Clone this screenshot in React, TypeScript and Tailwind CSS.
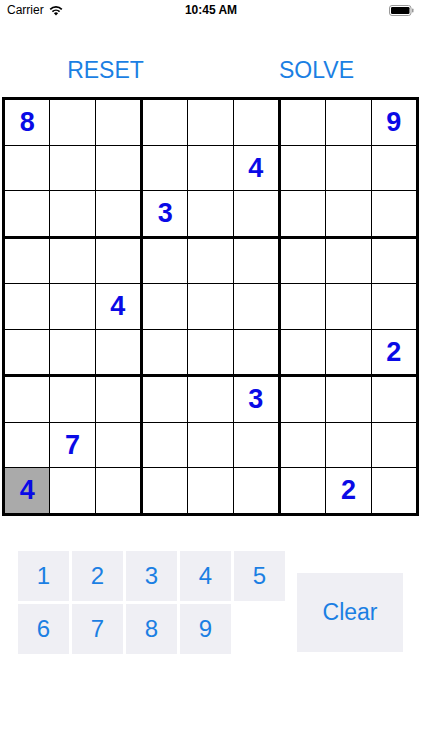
import React, { useState } from 'react';

// puzzle givens, row by row (0 = empty)
const GIVENS: number[][] = [
  [8, 0, 0, 0, 0, 0, 0, 0, 9],
  [0, 0, 0, 0, 0, 4, 0, 0, 0],
  [0, 0, 0, 3, 0, 0, 0, 0, 0],
  [0, 0, 0, 0, 0, 0, 0, 0, 0],
  [0, 0, 4, 0, 0, 0, 0, 0, 0],
  [0, 0, 0, 0, 0, 0, 0, 0, 2],
  [0, 0, 0, 0, 0, 3, 0, 0, 0],
  [0, 7, 0, 0, 0, 0, 0, 0, 0],
  [4, 0, 0, 0, 0, 0, 0, 2, 0],
];

const StatusBar = () => (
  <div className="h-5 flex items-center justify-between px-[7px] text-[12px] text-black relative">
    <div className="flex items-center gap-[5px]">
      <span>Carrier</span>
      <svg width="14" height="11" viewBox="0 0 14 11">
        <path d="M7 10.5 L4.9 8.2 A3 3 0 0 1 9.1 8.2 Z" fill="#000" />
        <path d="M3.4 6.7 A5.2 5.2 0 0 1 10.6 6.7" stroke="#000" strokeWidth="1.7" fill="none" />
        <path d="M1.2 4.3 A8.3 8.3 0 0 1 12.8 4.3" stroke="#000" strokeWidth="1.7" fill="none" />
      </svg>
    </div>
    <span className="absolute left-1/2 -translate-x-1/2 font-semibold">10:45 AM</span>
    <svg width="25" height="11" viewBox="0 0 25 11" className="mr-[1px]">
      <rect x="0.5" y="0.5" width="21.5" height="10" rx="2.5" fill="none" stroke="#999" />
      <rect x="2" y="2" width="18.5" height="7" rx="1.2" fill="#000" />
      <rect x="23" y="3.5" width="1.5" height="4" rx="0.7" fill="#999" />
    </svg>
  </div>
);

export default function App() {
  const [selected, setSelected] = useState<[number, number]>([8, 0]);

  return (
    <div
      className="w-[422px] h-[750px] bg-white overflow-hidden"
      style={{ fontFamily: '"Liberation Sans", Arial, sans-serif' }}
    >
      <StatusBar />

      <div className="flex h-[77px] items-center pt-[23px] text-[23px] text-[#1b7fe3]">
        <button className="flex-1 text-center">RESET</button>
        <button className="flex-1 text-center">SOLVE</button>
      </div>

      {/* board: black background shows through the gaps as grid lines */}
      <div className="ml-[2px] w-[417px] h-[419px] bg-black p-[3px] grid grid-cols-3 grid-rows-3 gap-[3px]">
        {Array.from({ length: 9 }).map((_, b) => {
          const br = Math.floor(b / 3) * 3;
          const bc = (b % 3) * 3;
          return (
            <div key={b} className="grid grid-cols-3 grid-rows-3 gap-px">
              {Array.from({ length: 9 }).map((_, i) => {
                const r = br + Math.floor(i / 3);
                const c = bc + (i % 3);
                const v = GIVENS[r][c];
                const isSel = selected[0] === r && selected[1] === c;
                return (
                  <div
                    key={i}
                    onClick={() => setSelected([r, c])}
                    className={`flex items-center justify-center text-[27px] font-bold text-[#0a0ae6] ${
                      isSel ? 'bg-[#aaaaaa]' : 'bg-white'
                    }`}
                  >
                    {v ? v : ''}
                  </div>
                );
              })}
            </div>
          );
        })}
      </div>

      <div className="flex items-start ml-[18px] mt-[35px]">
        <div className="grid grid-cols-[repeat(5,51px)] grid-rows-[50px_50px] gap-[3px]">
          {[1, 2, 3, 4, 5, 6, 7, 8, 9].map((n) => (
            <button
              key={n}
              className="bg-[#efeff4] text-[24px] text-[#1b7fe3] flex items-center justify-center"
            >
              {n}
            </button>
          ))}
        </div>
        <button className="ml-[12px] mt-[22px] w-[106px] h-[79px] bg-[#efeff4] text-[23px] text-[#1b7fe3]">
          Clear
        </button>
      </div>
    </div>
  );
}
